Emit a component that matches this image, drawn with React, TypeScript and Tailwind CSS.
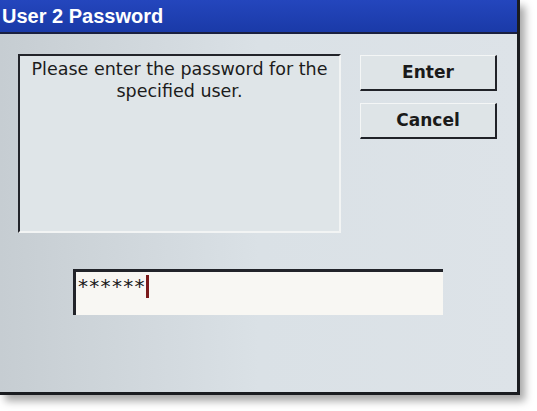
import React from "react";

export default function App() {
  const font = { fontFamily: '"DejaVu Sans", Verdana, sans-serif' };
  return (
    <div className="w-[537px] h-[411px] bg-white overflow-hidden" style={font}>
      <div className="w-[520px] h-[395px] flex flex-col border-r-[3px] border-b-[3px] border-[#1a1c20] bg-linear-to-r from-[#c6cdd2] via-[#dae1e6] to-[#dde3e8] shadow-[5px_6px_8px_rgba(0,0,0,0.35)]">
        <div className="h-[34px] shrink-0 bg-linear-to-b from-[#2446bd] to-[#1a3aa8] border-b-2 border-[#1a2040] flex items-center pl-[2px]">
          <span className="text-white font-bold text-[20px] leading-none" style={{ fontFamily: '"Liberation Sans", Arial, sans-serif' }}>User 2 Password</span>
        </div>
        <div className="flex pt-[20px] pl-[18px]">
          <div className="w-[323px] h-[179px] bg-[#dfe5e8] border-t-2 border-l-2 border-[#22242a] border-r-2 border-b-2 border-r-[#f2f4f4] border-b-[#f2f4f4] text-center text-[17.5px] leading-[22px] text-[#1c1c1c] pt-[2px] px-0">
            Please enter the password for the specified user.
          </div>
          <div className="flex flex-col gap-[12px] ml-[19px] pt-[1px]">
            <div className="w-[137px] h-[36px] bg-[#dee4e7] border-t border-l border-[#f4f6f6] border-r-2 border-b-2 border-r-[#202228] border-b-[#202228] flex items-center justify-center font-bold text-[17px] text-[#1a1a1a]">
              Enter
            </div>
            <div className="w-[137px] h-[36px] bg-[#dee4e7] border-t border-l border-[#f4f6f6] border-r-2 border-b-2 border-r-[#202228] border-b-[#202228] flex items-center justify-center font-bold text-[17px] text-[#1a1a1a]">
              Cancel
            </div>
          </div>
        </div>
        <div className="pl-[73px] pt-[36px]">
          <div className="w-[370px] h-[46px] bg-[#f8f7f3] border-t-[3px] border-l-[3px] border-[#22242a] flex items-start pt-[2px] pl-[2px]">
            <span className="text-[20px] leading-[24px] text-[#1a1a1a] tracking-[1.3px]">******</span>
            <span className="w-[3px] h-[23px] bg-[#7a1a1a] mt-[1px]"></span>
          </div>
        </div>
      </div>
    </div>
  );
}
